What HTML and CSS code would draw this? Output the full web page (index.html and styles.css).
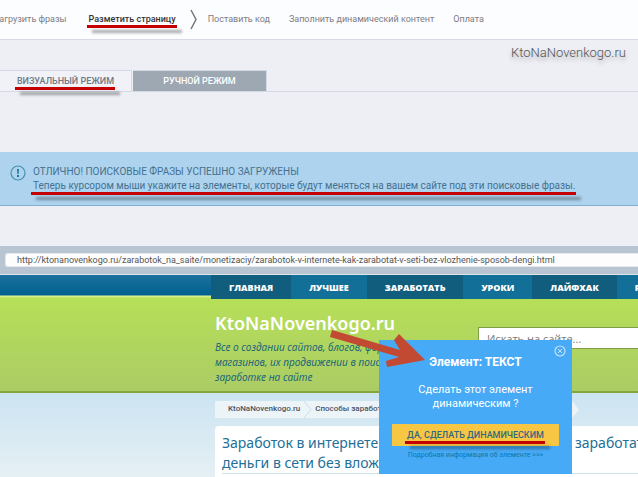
FILE: index.html
```html
<!DOCTYPE html>
<html lang="ru">
<head>
  <meta charset="UTF-8">
  <meta name="viewport" content="width=device-width, initial-scale=1.0">
  <title>Разметить страницу</title>
  <link rel="stylesheet" href="styles.css">
</head>
<body>
  <nav class="steps">
    <a href="#load">Загрузить фразы</a>
    <a href="#mark" class="current marked">Разметить страницу</a>
    <svg class="chevron" width="8" height="21" viewBox="0 0 8 21"><path d="M1 1 L6 10.500 L1 20" fill="none" stroke="#777" stroke-width="1.500"/></svg>
    <a href="#code">Поставить код</a>
    <a href="#content">Заполнить динамический контент</a>
    <a href="#pay">Оплата</a>
  </nav>

  <div class="watermark">KtoNaNovenkogo.ru</div>

  <div class="tabs">
    <button class="tab" type="button"><span class="marked">ВИЗУАЛЬНЫЙ РЕЖИМ</span></button>
    <button class="tab tab-grey" type="button">РУЧНОЙ РЕЖИМ</button>
  </div>

  <div class="notice">
    <svg width="16" height="16" viewBox="0 0 16 16"><circle cx="8" cy="8" r="7" fill="none" stroke="#4592b0" stroke-width="1.200"/><path d="M7 4h2l-.4 5h-1.200zM7 10h2v2h-2z" fill="#1f7799"/></svg>
    <div>
      <p>ОТЛИЧНО! ПОИСКОВЫЕ ФРАЗЫ УСПЕШНО ЗАГРУЖЕНЫ</p>
      <p><span class="marked">Теперь курсором мыши укажите на элементы, которые будут меняться на вашем сайте под эти поисковые фразы.</span></p>
    </div>
  </div>

  <div class="address">
    <input type="text" aria-label="Адрес страницы" value="http://ktonanovenkogo.ru/zarabotok_na_saite/monetizaciy/zarabotok-v-internete-kak-zarabotat-v-seti-bez-vlozhenie-sposob-dengi.html">
  </div>

  <div class="site">
    <nav class="menu">
      <a href="#home">ГЛАВНАЯ</a>
      <a href="#best">ЛУЧШЕЕ</a>
      <a href="#earn">ЗАРАБОТАТЬ</a>
      <a href="#lessons">УРОКИ</a>
      <a href="#lifehack">ЛАЙФХАК</a>
      <a href="#ads">РЕКЛАМА</a>
    </nav>

    <header class="header">
      <div class="brand">
        <a class="logo" href="#home">KtoNaNovenkogo.ru</a>
        <p>Все о создании сайтов, блогов, форумов,<br>магазинов, их продвижении в поисковиках и<br>заработке на сайте</p>
      </div>
      <input class="search" type="text" aria-label="Поиск" placeholder="Искать на сайте...">
    </header>

    <main class="main">
      <div class="crumbs">
        <a href="#home">KtoNaNovenkogo.ru</a>
        <svg width="8" height="17" viewBox="0 0 8 17"><path d="M0 0 L7 8.500 L0 17" fill="none" stroke="#c5dfe9"/></svg>
        <a href="#ways">Способы заработка на сайте</a>
      </div>
      <article class="article">
        <h1>Заработок в интернете без вложений и как быстро&nbsp; заработать<br>деньги в сети без вложений</h1>
      </article>
    </main>

    <div class="popup">
      <button class="close" type="button" aria-label="Закрыть">
        <svg width="12" height="12" viewBox="0 0 12 12"><circle cx="6" cy="6" r="5" fill="none" stroke="#c4e1f8" stroke-width="1.200"/><path d="M4 4l4 4M8 4l-4 4" stroke="#c4e1f8"/></svg>
      </button>
      <h2>Элемент: ТЕКСТ</h2>
      <p>Сделать этот элемент динамическим ?</p>
      <button class="confirm" type="button"><span class="marked">ДА, СДЕЛАТЬ ДИНАМИЧЕСКИМ</span></button>
      <a href="#more">Подробная информация об элементе &gt;&gt;&gt;</a>
      <svg class="arrow" width="96" height="38" viewBox="0 0 96 38"><path d="M2 0 L70 20 L64 10 L69 4 L95 30 L57 37 L56 31 L69 27 L0 7 Z" fill="#c24a33"/></svg>
    </div>
  </div>
</body>
</html>
```
FILE: styles.css
```css
* {
  box-sizing: border-box;
}

body {
  margin: 0;
  height: 100vh;
  display: flex;
  flex-direction: column;
  font-family: Roboto, "Liberation Sans", sans-serif;
  font-size: 10px;
  background: #eeeff5;
  overflow: hidden;
}

a {
  color: inherit;
  text-decoration: none;
}

p, h1, h2 {
  margin: 0;
}

button {
  border: none;
  padding: 0;
  font-family: inherit;
  cursor: pointer;
}

/* red marker stroke under a phrase */
.marked {
  position: relative;
}

.marked::after {
  content: "";
  position: absolute;
  left: -2px;
  right: -1px;
  bottom: -4px;
  height: 3px;
  background: #c40000;
  box-shadow: 5px 5px 3px rgba(0, 0, 0, 0.35);
}

.steps {
  display: flex;
  align-items: center;
  height: 40px;
  margin-left: -6px;
  background: #fcfdff;
  border-bottom: 1px solid #d7dae5;
  font-size: 9px;
  line-height: 11px;
  color: #7c7c82;
  white-space: nowrap;
}

.steps .current {
  margin-left: 22px;
  color: #333;
  font-weight: 500;
}

.steps .current::after {
  bottom: -3px;
}

.steps .chevron {
  margin: 0 10px 0 14px;
}

.steps a + a:not(.current) {
  margin-left: 19px;
}

.steps .chevron + a {
  margin-left: 0;
}

.watermark {
  align-self: flex-end;
  margin-right: 12px;
  height: 30px;
  padding-top: 4px;
  font-size: 13px;
  line-height: 18px;
  font-weight: 300;
  color: #555;
  text-shadow: 0 3px 4px #aaa;
}

.tabs {
  display: flex;
  gap: 1px;
  height: 22px;
  border-bottom: 1px solid #d3dae5;
}

.tab {
  width: 132px;
  border: 1px solid #d3dae5;
  border-width: 1px 1px 0 0;
  background: #f1f2f7;
  color: #6f7884;
  font-size: 9px;
  line-height: 12px;
  font-weight: 500;
}

.tab-grey {
  width: 134px;
  background: #9da8b3;
  color: #fff;
}

.notice {
  display: flex;
  gap: 7px;
  height: 54px;
  margin-top: 60px;
  padding: 13px 10px;
  background: #aed3ee;
  border-bottom: 1px solid #84aed1;
  color: #44718f;
  line-height: 14px;
  white-space: nowrap;
}

.notice svg {
  flex: none;
}

.address {
  margin-top: 40px;
  height: 29px;
  padding: 7px 0 0 5px;
  background: #b9c4d3;
  border-bottom: 1px solid #dfe5ec;
}

.address input {
  display: block;
  width: 100%;
  height: 14px;
  padding: 0 11px;
  border: 1px solid #e4e8ee;
  border-width: 1px 0 1px 1px;
  border-radius: 3px 0 0 3px;
  background: #fdfdfe;
  color: #555;
  font-family: inherit;
  font-size: 9px;
}

.site {
  position: relative;
  flex: 1;
  min-height: 0;
  display: flex;
  flex-direction: column;
  white-space: nowrap;
}

.menu {
  display: flex;
  height: 24px;
  padding-left: 211px;
  background: linear-gradient(#1c719c, #01608f 20px, #dff596 21px, #b9df5d 23px);
  overflow: hidden;
}

.menu a {
  padding: 0 18px;
  background: #126f98;
  color: #fff;
  font-family: "Open Sans", sans-serif;
  font-size: 9px;
  line-height: 25px;
  font-weight: 800;
}

.menu a:nth-child(odd) {
  background: #115d7d;
}

.header {
  display: flex;
  height: 94px;
  padding: 13px 0 0 215px;
  background: linear-gradient(#b6df58, #abcc65);
  border-bottom: 2px solid #86a63c;
}

.brand {
  flex: none;
  width: 263px;
  color: #12607c;
  font-family: "Open Sans", sans-serif;
  font-size: 10px;
  line-height: 15px;
  font-style: italic;
}

.logo {
  display: block;
  margin-bottom: 6px;
  color: #fff;
  font-family: "Noto Sans", sans-serif;
  font-size: 18px;
  line-height: 22px;
  font-style: normal;
  font-weight: 600;
}

.search {
  flex: 1;
  min-width: 0;
  height: 22px;
  margin-top: 15px;
  padding: 0 8px;
  border: 1px solid #819c4b;
  border-right: none;
  background: #fff;
  font-family: "Open Sans", sans-serif;
  font-size: 11px;
}

.search::placeholder {
  color: #777;
}

.main {
  flex: 1;
  min-height: 0;
  display: flex;
  flex-direction: column;
  padding: 8px 0 0 215px;
  background: linear-gradient(#cce4f2, #e5f0f4);
}

.crumbs {
  display: flex;
  width: 364px;
  height: 17px;
  background: #edf4f8;
  clip-path: polygon(0 0, 357px 0, 100% 50%, 357px 100%, 0 100%);
  color: #4b5265;
  font-size: 8px;
  line-height: 15px;
  font-weight: 500;
}

.crumbs a {
  padding: 0 4px 0 13px;
}

.crumbs svg + a {
  padding-left: 3px;
}

.article {
  flex: 1;
  min-height: 0;
  margin-top: 8px;
  padding: 7px 0 0 7px;
  border-radius: 4px 0 0 0;
  background: #fff;
  overflow: hidden;
}

.article h1 {
  border-bottom: 1px solid #cfe3ee;
  color: #226f98;
  font-family: "Noto Sans", sans-serif;
  font-size: 14px;
  line-height: 20px;
  font-weight: normal;
}

.popup {
  position: absolute;
  left: 379px;
  top: 65px;
  width: 193px;
  padding: 14px 13px 13px;
  display: flex;
  flex-direction: column;
  background: #47aaf6;
  color: #fff;
  text-align: center;
  white-space: normal;
}

.popup h2 {
  font-size: 12px;
  line-height: 16px;
}

.popup p {
  padding: 13px 20px;
  font-size: 11px;
  line-height: 14px;
}

.popup > a {
  margin-top: 4px;
  color: #0878ab;
  font-size: 7px;
  line-height: 11px;
  white-space: nowrap;
}

.confirm {
  height: 22px;
  border-radius: 1px;
  background: #f7c744;
  color: #31677f;
  font-size: 9px;
  line-height: 14px;
  font-weight: 500;
}

.close {
  position: absolute;
  top: 5px;
  right: 6px;
  height: 12px;
  background: none;
}

.close svg {
  display: block;
}

.arrow {
  position: absolute;
  left: -49px;
  top: -10px;
}
```
